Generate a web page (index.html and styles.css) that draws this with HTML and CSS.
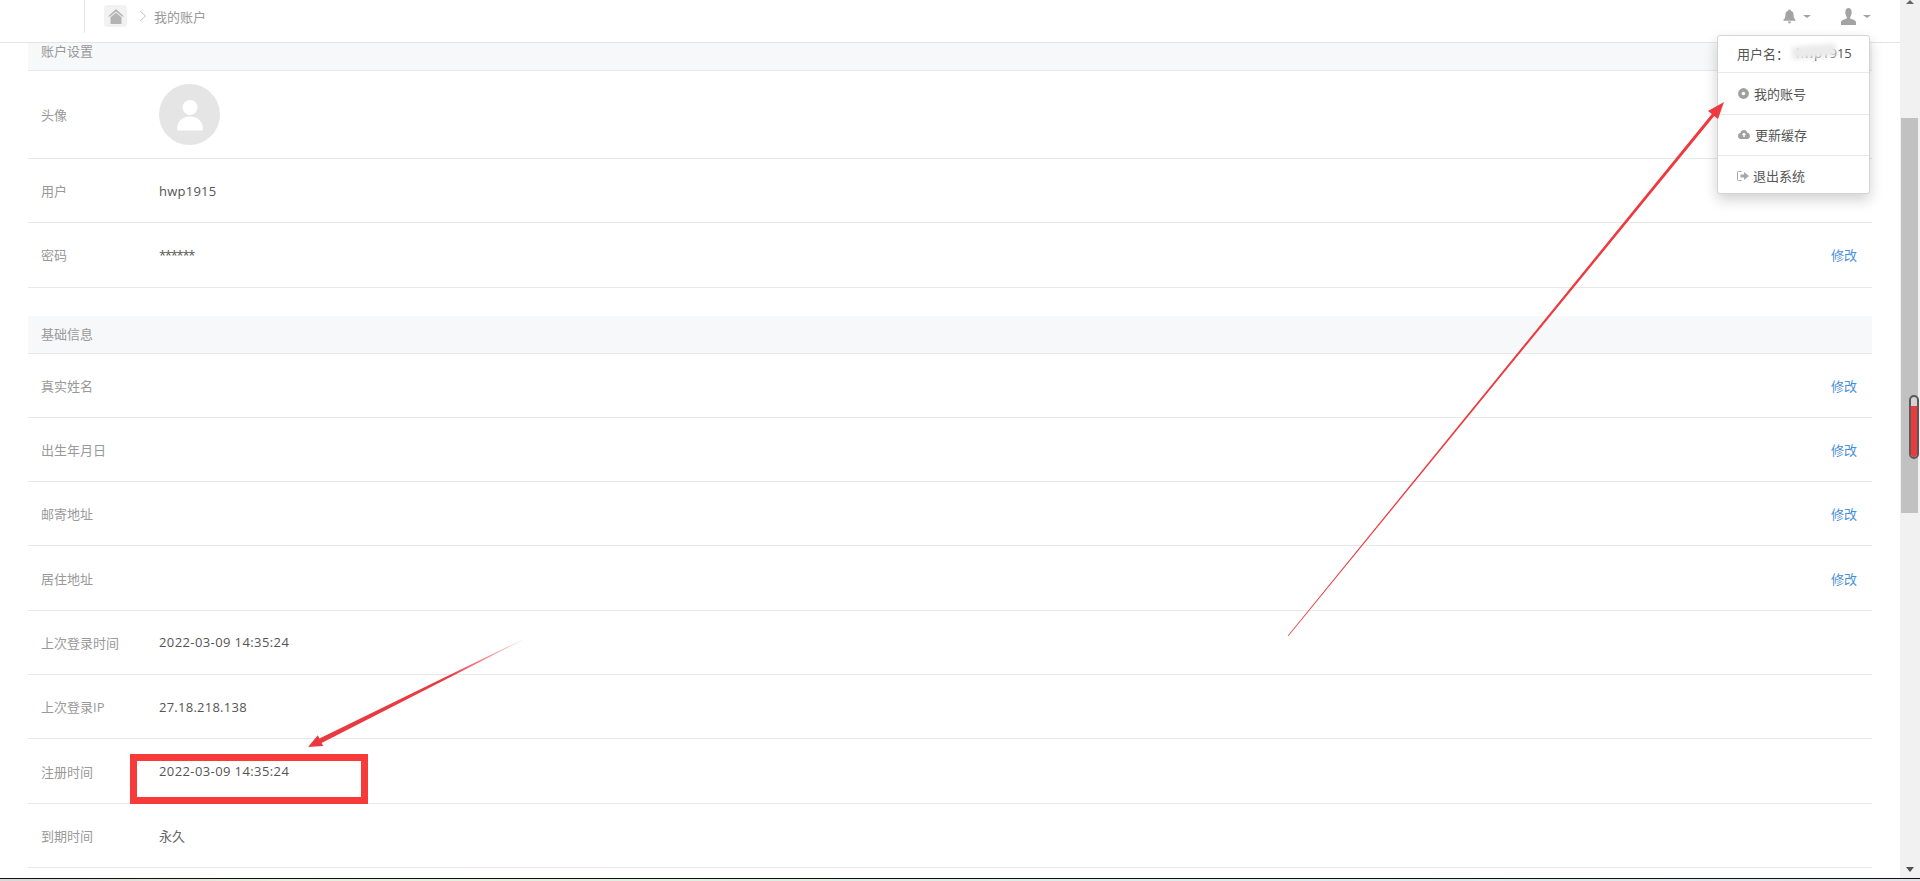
FILE: index.html
```html
<!DOCTYPE html>
<html>
<head>
    <meta charset="utf-8">
    <link rel="stylesheet" href="styles.css">
</head>
<body>
    <div class="window">
        <div class="main">
            <div class="topbar">
                <div class="topbar-side"></div>
                <div class="crumbs">
                    <span class="home-btn">
                        <svg width="16" height="15" viewBox="0 0 16 15"><path d="M8 0 L16 7.5 L14 7.5 L8 2.6 L2 7.5 L0 7.5 Z M8 3.8 L13.5 8.2 L13.5 15 L2.5 15 L2.5 8.2 Z" fill="#b4b4b4"/></svg>
                    </span>
                    <svg class="chevron" width="8" height="12" viewBox="0 0 8 12"><path d="M1 1 L6.5 6 L1 11" fill="none" stroke="#c4c4c4" stroke-width="1"/></svg>
                    <span class="crumb-text">我的账户</span>
                </div>
                <div class="top-actions">
                    <span class="top-icon">
                        <svg width="13" height="15" viewBox="0 0 14 15"><path d="M7 0 C8 0 8.4 .6 8.4 1.3 C10.6 1.9 11.4 3.8 11.4 6 C11.4 8.8 12.2 10 13.6 11.4 L13.6 12.2 L.4 12.2 L.4 11.4 C1.8 10 2.6 8.8 2.6 6 C2.6 3.8 3.4 1.9 5.6 1.3 C5.6 .6 6 0 7 0 Z M5.2 13 L8.8 13 C8.6 14.2 7.9 15 7 15 C6.1 15 5.4 14.2 5.2 13 Z" fill="#a3a3a3"/></svg>
                        <i class="caret"></i>
                    </span>
                    <span class="top-icon">
                        <svg width="15" height="17" viewBox="0 0 16 16" preserveAspectRatio="none"><path d="M8 0 C10.2 0 11.4 1.7 11.4 4 C11.4 6 10.6 7.6 9.7 8.6 L9.7 9.8 C12.4 10.7 16 11.4 16 13.4 L16 16 L0 16 L0 13.4 C0 11.4 3.6 10.7 6.3 9.8 L6.3 8.6 C5.4 7.6 4.6 6 4.6 4 C4.6 1.7 5.8 0 8 0 Z" fill="#a3a3a3"/></svg>
                        <i class="caret"></i>
                    </span>
                </div>
            </div>

            <div class="content">
                <div class="section">
                    <div class="section-title">账户设置</div>
                    <div class="row row-avatar">
                        <div class="label">头像</div>
                        <div class="value">
                            <div class="avatar">
                                <svg width="28" height="32" viewBox="0 0 28 32"><circle cx="14" cy="8.5" r="7.5" fill="#fff"/><path d="M1 30 C1 23 6 17.5 14 17.5 C22 17.5 27 23 27 30 C27 31 26 31.5 25 31.5 L3 31.5 C2 31.5 1 31 1 30 Z" fill="#fff"/></svg>
                            </div>
                        </div>
                    </div>
                    <div class="row"><div class="label">用户</div><div class="value value-plain">hwp1915</div></div>
                    <div class="row"><div class="label">密码</div><div class="value value-stars">******</div><a class="edit">修改</a></div>
                </div>

                <div class="section">
                    <div class="section-title">基础信息</div>
                    <div class="row"><div class="label">真实姓名</div><div class="value"></div><a class="edit">修改</a></div>
                    <div class="row"><div class="label">出生年月日</div><div class="value"></div><a class="edit">修改</a></div>
                    <div class="row"><div class="label">邮寄地址</div><div class="value"></div><a class="edit">修改</a></div>
                    <div class="row"><div class="label">居住地址</div><div class="value"></div><a class="edit">修改</a></div>
                    <div class="row"><div class="label">上次登录时间</div><div class="value value-time">2022-03-09 14:35:24</div></div>
                    <div class="row"><div class="label">上次登录IP</div><div class="value value-plain">27.18.218.138</div></div>
                    <div class="row"><div class="label">注册时间</div><div class="value value-time">2022-03-09 14:35:24</div></div>
                    <div class="row"><div class="label">到期时间</div><div class="value value-light">永久</div></div>
                </div>
            </div>

            <!-- user dropdown -->
            <div class="menu">
                <div class="menu-name">用户名：<span class="name-text">hwp1915</span><span class="name-blur"></span></div>
                <div class="menu-item">
                    <svg width="11" height="11" viewBox="0 0 11 11"><circle cx="5.5" cy="5.5" r="5.4" fill="#a0a0a0"/><circle cx="5.5" cy="5.5" r="1.8" fill="#fff"/></svg>
                    我的账号
                </div>
                <div class="menu-item">
                    <svg width="12" height="9" viewBox="0 0 12 9"><path d="M6 0 C7.8 0 9 1.2 9.2 2.8 C10.8 3 12 4.2 12 5.9 C12 7.6 10.8 9 9 9 L3 9 C1.2 9 0 7.6 0 5.9 C0 4.5 .9 3.4 2.4 3.1 C2.8 1.3 4.2 0 6 0 Z" fill="#a0a0a0"/><path d="M6 2.6 L8.2 5 L6.8 5 L6.8 7 L5.2 7 L5.2 5 L3.8 5 Z" fill="#fff"/></svg>
                    更新缓存
                </div>
                <div class="menu-item menu-item-exit">
                    <svg width="12" height="10" viewBox="0 0 12 10"><path d="M4.5 .5 L1.5 .5 C1 .5 .5 1 .5 1.5 L.5 8.5 C.5 9 1 9.5 1.5 9.5 L4.5 9.5" fill="none" stroke="#a8a8a8" stroke-width="1"/><path d="M3.5 3.5 L7 3.5 L7 1 L12 5 L7 9 L7 6.5 L3.5 6.5 Z" fill="#a8a8a8"/></svg>
                    退出系统
                </div>
            </div>

            <!-- red marks drawn on the screenshot -->
            <svg class="marks" width="1900" height="878" viewBox="0 0 1900 878">
                <defs>
                    <linearGradient id="tail" gradientUnits="userSpaceOnUse" x1="522" y1="640" x2="450" y2="676">
                        <stop offset="0" stop-color="#f53b3b" stop-opacity="0.15"/>
                        <stop offset="1" stop-color="#e83a40"/>
                    </linearGradient>
                </defs>
                <polygon points="1287.7,635.8 1711.8,114 1708,111 1724,102 1718,119 1714.2,116 1288.3,636.2" fill="#ee3a3e"/>
                <polygon points="522,639.7 319.4,738.5 317.8,735.3 308,747 323.2,746.1 321.6,742.9 522,640.3" fill="url(#tail)"/>
                <rect x="133.5" y="757.5" width="231" height="43" fill="none" stroke="#f93a3a" stroke-width="7"/>
            </svg>
        </div>

        <div class="scrollbar">
            <i class="arrow-up"></i>
            <div class="track">
                <div class="thumb"></div>
            </div>
            <i class="arrow-down"></i>
            <div class="pill"><div class="pill-fill"></div></div>
        </div>
    </div>
    <div class="taskbar-edge"></div>
</body>
</html>
```

FILE: styles.css
```css
*{
    box-sizing: border-box;
}

html, body{
    height: 100%;
    margin: 0;
    overflow: hidden;
}

body{
    background-color: white;
    color: #555;
    font-family: 'Open Sans', 'Noto Sans CJK SC', sans-serif;
    font-size: 13px;
}

.window{
    display: flex;
    height: 878px;
}

.main{
    flex: 1;
    position: relative;
    overflow: hidden;
}

.topbar{
    position: relative;
    z-index: 2;
    display: flex;
    align-items: flex-start;
    height: 43px;
    background-color: white;
    border-bottom: 1px solid #e4e4e4;
}

.topbar-side{
    width: 85px;
    height: 33px;
    border-right: 1px solid #e8e8e8;
}

.crumbs{
    display: flex;
    align-items: center;
    margin-left: 19px;
    margin-top: 5px;
}

.home-btn{
    display: flex;
    align-items: center;
    justify-content: center;
    width: 23px;
    height: 22px;
    background-color: #f2f2f2;
    border-radius: 3px;
}

.chevron{
    margin-left: 12px;
}

.crumb-text{
    margin-left: 7px;
    color: #999;
}

.top-actions{
    display: flex;
    gap: 30px;
    margin-left: auto;
    margin-right: 29px;
    margin-top: 8px;
}

.top-icon{
    display: flex;
    align-items: center;
    gap: 7px;
}

.caret{
    width: 0;
    height: 0;
    border-left: 4px solid transparent;
    border-right: 4px solid transparent;
    border-top: 3px solid #a3a3a3;
}

.content{
    margin-top: -10px;
    padding: 0 28px;
}

.section{
    margin-bottom: 28px;
}

.section-title{
    height: 38px;
    line-height: 37px;
    padding-left: 13px;
    background-color: #f7f8fa;
    border-bottom: 1px solid #e8e8e8;
    color: #999;
}

.row{
    display: flex;
    align-items: center;
    height: 64.3px;
    padding: 0 13px;
    border-bottom: 1px solid #e8e8e8;
}

.row-avatar{
    height: 88px;
}

.label{
    width: 118px;
    color: #999;
}

.value{
    flex: 1;
}

.value-time{
    letter-spacing: 0.4px;
}

.value-plain{
    letter-spacing: 0.25px;
}

.value-stars{
    letter-spacing: -1.3px;
}

.value-light{
    color: #666;
}

.edit{
    margin-right: 2px;
    color: #4a90d9;
}

.avatar{
    display: flex;
    align-items: center;
    justify-content: center;
    width: 61px;
    height: 61px;
    border-radius: 50%;
    background-color: #e5e5e5;
}

.menu{
    position: absolute;
    z-index: 3;
    top: 35px;
    left: 1717px;
    width: 153px;
    height: 159px;
    background-color: white;
    border: 1px solid #d4d4d4;
    border-radius: 3px;
    box-shadow: 0 6px 14px rgba(0, 0, 0, 0.18);
}

.menu-name{
    position: relative;
    display: flex;
    align-items: center;
    height: 37px;
    padding-left: 19px;
    padding-bottom: 2px;
    border-bottom: 1px solid #e8e8e8;
}

.name-text{
    margin-left: 7px;
}

.name-blur{
    position: absolute;
    top: 9px;
    left: 74px;
    width: 44px;
    height: 13px;
    background-color: #ebebeb;
    transform: rotate(-5deg);
    filter: blur(2px);
}

.menu-item{
    display: flex;
    align-items: center;
    gap: 5px;
    height: 41.5px;
    padding-left: 20px;
    border-bottom: 1px solid #e8e8e8;
}

.menu-item-exit{
    gap: 4px;
    height: 37px;
    padding-left: 19px;
    padding-top: 2px;
    border-bottom: none;
}

.marks{
    position: absolute;
    z-index: 4;
    top: 0;
    left: 0;
    pointer-events: none;
}

.scrollbar{
    position: relative;
    display: flex;
    flex-direction: column;
    align-items: center;
    width: 20px;
    background-color: #f1f1f1;
}

.arrow-up{
    width: 0;
    height: 0;
    border-left: 4px solid transparent;
    border-right: 4px solid transparent;
    border-bottom: 4px solid #666;
}

.track{
    flex: 1;
    width: 100%;
}

.thumb{
    width: 17px;
    height: 395px;
    margin-top: 114px;
    margin-left: 1px;
    background-color: #c1c1c1;
}

.arrow-down{
    margin-bottom: 6px;
    width: 0;
    height: 0;
    border-left: 4px solid transparent;
    border-right: 4px solid transparent;
    border-top: 5px solid #505050;
}

.pill{
    position: absolute;
    top: 395px;
    left: 9px;
    width: 10px;
    height: 64px;
    padding-top: 9px;
    background-color: #d4d4d4;
    border: 2px solid #5a5a5a;
    border-radius: 5px;
    overflow: hidden;
}

.pill-fill{
    height: 100%;
    background-color: #ea3b3e;
}

.taskbar-edge{
    height: 3px;
    border-top: 1px solid #111;
    background: linear-gradient(to right, #d8d8d8, #e6f0dc 15%, #dceee0 40%, #d8ecf0 70%, #e0e4e8);
}
```
